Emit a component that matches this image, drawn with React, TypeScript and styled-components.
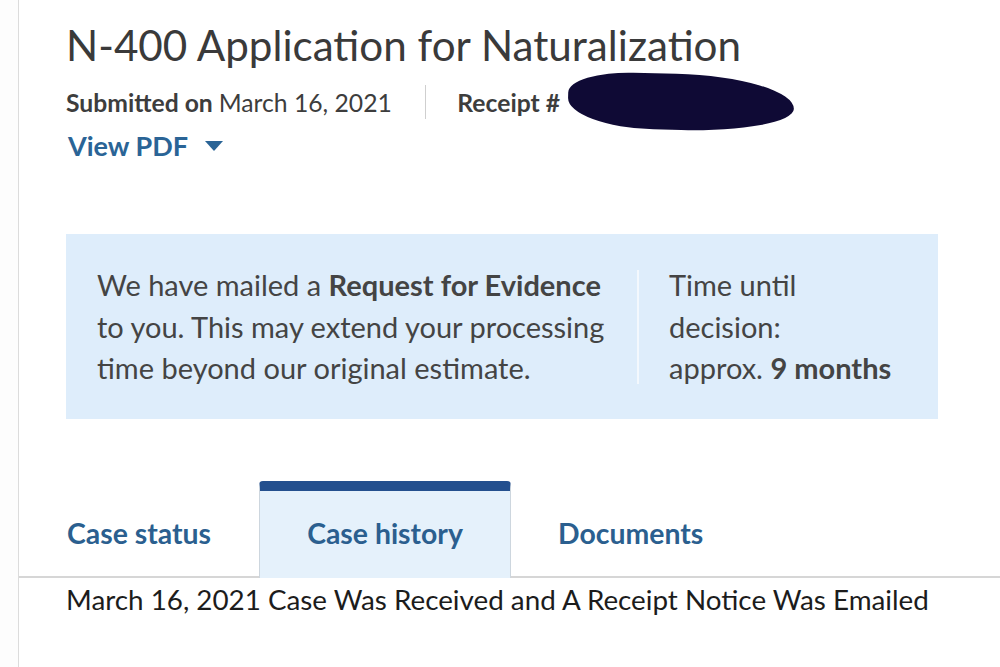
import React from 'react'
import styled, { createGlobalStyle } from 'styled-components'

const GlobalStyle = createGlobalStyle`
  html, body {
    margin: 0;
    padding: 0;
    background: #ffffff;
  }
  body {
    font-family: Lato, 'Noto Sans', sans-serif;
  }
`

const Page = styled.div`
  width: 1000px;
  height: 667px;
  overflow: hidden;
  display: flex;
  background: #ffffff;
`

const Gutter = styled.div`
  width: 18px;
  flex-shrink: 0;
  background: #fdfdfd;
  border-right: 1.5px solid #dcdcdc;
`

const Main = styled.main`
  flex: 1;
  display: flex;
  flex-direction: column;
`

const Header = styled.header`
  padding: 19px 0 0 47px;
`

const Title = styled.h1`
  margin: 0;
  font-size: 42.2px;
  font-weight: 400;
  color: #3a3a3a;
  line-height: 52px;
`

const MetaRow = styled.div`
  display: flex;
  align-items: center;
  margin-top: 14px;
  height: 34px;
  font-size: 24.7px;
  color: #3d3d3d;
`

const MetaItem = styled.span`
  display: flex;
  align-items: center;
  b {
    font-weight: 700;
    margin-right: 6px;
  }
`

const MetaDivider = styled.span`
  width: 1.5px;
  height: 34px;
  background: #cfcfcf;
  margin: 0 31px 0 33px;
`

const Redaction = styled.span`
  display: inline-block;
  width: 226px;
  height: 56px;
  margin-left: 2px;
  background: #0f0a35;
  border-radius: 30% 55% 52% 40% / 40% 60% 45% 55%;
  transform: rotate(1.5deg);
`

const ViewPdf = styled.a`
  display: inline-flex;
  align-items: center;
  gap: 17px;
  margin-top: 10px;
  margin-left: 2px;
  font-size: 27px;
  font-weight: 700;
  color: #2a6496;
  cursor: pointer;
`

const Caret = styled.span`
  width: 0;
  height: 0;
  border-left: 9px solid transparent;
  border-right: 9px solid transparent;
  border-top: 10px solid #2a6496;
`

const Notice = styled.section`
  margin: 72px 0 0 47px;
  width: 872px;
  height: 185px;
  background: #deedfb;
  display: flex;
  align-items: center;
  padding-left: 31px;
  box-sizing: border-box;
  font-size: 29px;
  line-height: 41.5px;
  color: #444444;
  b {
    font-weight: 700;
  }
`

const NoticeText = styled.p`
  margin: 0;
  width: 510px;
  white-space: nowrap;
`

const NoticeDivider = styled.span`
  width: 2px;
  height: 114px;
  background: #f3f8fd;
  margin: 0 30px 0 30px;
`

const NoticeSide = styled.p`
  margin: 0;
  width: 240px;
  white-space: nowrap;
`

const Tabs = styled.nav`
  display: flex;
  align-items: flex-end;
  margin-top: 62px;
  padding-left: 47px;
  height: 95px;
  border-bottom: 2px solid #d6d6d6;
`

const Tab = styled.a<{ $active?: boolean }>`
  display: flex;
  align-items: center;
  justify-content: center;
  box-sizing: border-box;
  height: 97px;
  padding-bottom: 4px;
  width: ${p => (p.$active ? '252px' : 'auto')};
  margin: ${p => (p.$active ? '0 46px -2px 47px' : '0 0 -2px 0')};
  font-size: 28.4px;
  font-weight: 700;
  color: #2b5f8f;
  background: ${p => (p.$active ? '#e5f1fb' : 'transparent')};
  border: 1px solid ${p => (p.$active ? '#cdd6de' : 'transparent')};
  border-top: 10px solid ${p => (p.$active ? '#234f8e' : 'transparent')};
  border-bottom: none;
  border-radius: 4px 4px 0 0;
  cursor: pointer;
`

const HistoryLine = styled.p`
  margin: 5px 0 0 47px;
  font-size: 27.8px;
  color: #1c1c1c;
`

export default function App() {
  return (
    <>
      <GlobalStyle />
      <Page>
        <Gutter />
        <Main>
          <Header>
            <Title>N-400 Application for Naturalization</Title>
            <MetaRow>
              <MetaItem>
                <b>Submitted on</b> March 16, 2021
              </MetaItem>
              <MetaDivider />
              <MetaItem>
                <b>Receipt #</b>
                <Redaction />
              </MetaItem>
            </MetaRow>
            <ViewPdf>
              View PDF <Caret />
            </ViewPdf>
          </Header>
          <Notice>
            <NoticeText>
              We have mailed a <b>Request for Evidence</b>
              <br />
              to you. This may extend your processing
              <br />
              time beyond our original estimate.
            </NoticeText>
            <NoticeDivider />
            <NoticeSide>
              Time until
              <br />
              decision:
              <br />
              approx. <b>9 months</b>
            </NoticeSide>
          </Notice>
          <Tabs>
            <Tab>Case status</Tab>
            <Tab $active>Case history</Tab>
            <Tab>Documents</Tab>
          </Tabs>
          <HistoryLine>March 16, 2021 Case Was Received and A Receipt Notice Was Emailed</HistoryLine>
        </Main>
      </Page>
    </>
  )
}
